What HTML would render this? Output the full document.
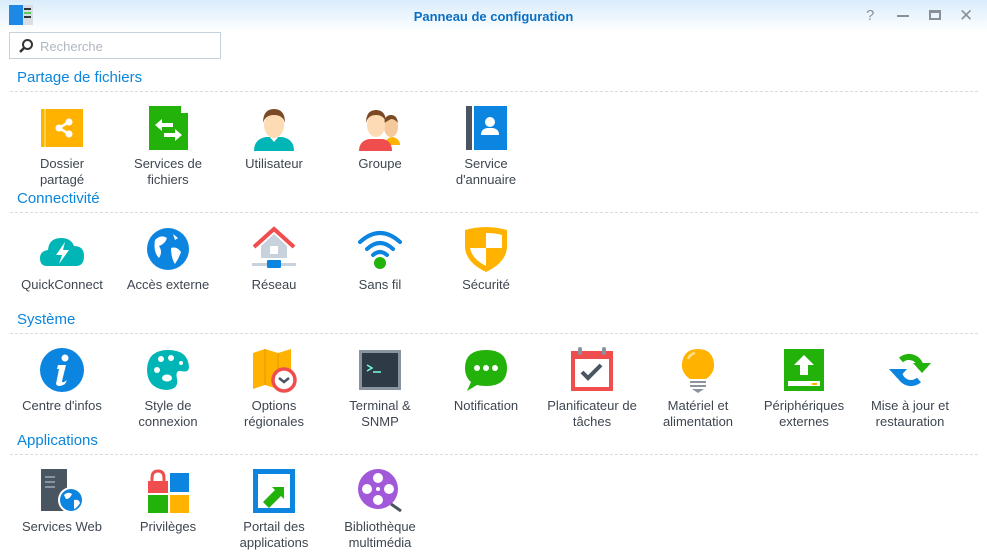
<!DOCTYPE html>
<html><head><meta charset="utf-8"><style>
*{margin:0;padding:0;box-sizing:border-box}
body{width:987px;height:558px;overflow:hidden;background:#fff;font-family:"Liberation Sans",sans-serif;position:relative}
.tb{position:absolute;left:0;top:0;width:987px;height:32px;background:linear-gradient(#d9ecfb,#fff)}
.title{position:absolute;left:0;width:987px;top:9px;text-align:center;font-size:13px;font-weight:bold;color:#0a6fc2}
.search{position:absolute;left:9px;top:32px;width:212px;height:27px;border:1px solid #c5d1dc;background:#fff}
.search span{position:absolute;left:30px;top:6px;font-size:13px;color:#b0b8c0}
.h{position:absolute;left:17px;font-size:15px;color:#0a86dc}
.line{position:absolute;left:10px;width:968px;border-top:1px dashed #d6dce2}
.it{position:absolute;width:106px;text-align:center;font-size:13px;color:#3e4650;line-height:16px}
.it svg{display:block;margin:0 auto 5px;width:46px;height:46px}
</style></head><body>
<div class="tb"></div>
<svg style="position:absolute;left:9px;top:5px" width="24" height="20" viewBox="0 0 24 20"><rect x="0" y="0" width="14" height="20" fill="#1e88e5"/><rect x="14" y="0" width="10" height="20" fill="#d8dee4"/><rect x="15" y="3" width="7" height="2" fill="#333"/><rect x="15" y="7" width="7" height="2" fill="#5c5"/><rect x="15" y="11" width="7" height="2" fill="#333"/></svg>
<div class="title">Panneau de configuration</div>
<div style="position:absolute;left:866px;top:7px;font-size:15px;color:#8a9098">?</div>
<div style="position:absolute;left:897px;top:15px;width:12px;height:2px;background:#8a9098"></div>
<div style="position:absolute;left:929px;top:10px;width:12px;height:10px;border:2px solid #8a9098;border-top-width:3px"></div>
<div style="position:absolute;left:959px;top:6px;font-size:17px;color:#8a9098">✕</div>
<div class="search"><svg style="position:absolute;left:8px;top:5px" width="16" height="16" viewBox="0 0 16 16"><circle cx="9.5" cy="6.5" r="4.5" fill="none" stroke="#333" stroke-width="2"/><line x1="6" y1="10" x2="2" y2="14" stroke="#333" stroke-width="2.5"/></svg><span>Recherche</span></div>

<div class="h" style="top:69px">Partage de fichiers</div><div class="line" style="top:91px"></div>
<div class="h" style="top:190px">Connectivité</div><div class="line" style="top:212px"></div>
<div class="h" style="top:311px">Système</div><div class="line" style="top:333px"></div>
<div class="h" style="top:432px">Applications</div><div class="line" style="top:454px"></div>

<!-- row 1 -->
<div class="it" style="left:9px;top:105px"><svg viewBox="0 0 46 46"><rect x="2" y="4" width="42" height="38" fill="#ffb300"/><rect x="5" y="4" width="2" height="38" fill="#ffd34d"/><g stroke="#fff" stroke-width="2.5"><line x1="20" y1="23" x2="30" y2="17"/><line x1="20" y1="23" x2="30" y2="29"/></g><circle cx="20" cy="23" r="3.5" fill="#fff"/><circle cx="30" cy="17" r="3.5" fill="#fff"/><circle cx="30" cy="29" r="3.5" fill="#fff"/></svg>Dossier<br>partagé</div>
<div class="it" style="left:115px;top:105px"><svg viewBox="0 0 46 46"><path d="M4 1H36L43 8V45H4Z" fill="#22b20a"/><path d="M36 1V8H43Z" fill="#fff"/><path d="M10 20L17 14V18H28V22H17V26Z M37 30L30 24V28H19V32H30V36Z" fill="#fff"/></svg>Services de<br>fichiers</div>
<div class="it" style="left:221px;top:105px"><svg viewBox="0 0 46 46"><path d="M3 46Q3 34 15 32H31Q43 34 43 46Z" fill="#00b5b5"/><path d="M17 30H29L23 37Z" fill="#fff"/><ellipse cx="23" cy="20" rx="10" ry="13" fill="#fddcb5"/><path d="M12 18Q12 4 23 4Q34 4 34 18Q32 10 23 10Q14 10 12 18Z" fill="#7a4a24"/></svg>Utilisateur</div>
<div class="it" style="left:327px;top:105px"><svg viewBox="0 0 46 46"><path d="M26 40Q30 32 36 32Q43 34 43 40Z" fill="#ffb300"/><ellipse cx="34" cy="22" rx="7" ry="10" fill="#f5c99a"/><path d="M27 18Q28 10 34 10Q40 10 41 18Q38 14 34 14Z" fill="#7a4a24"/><path d="M2 46Q2 36 12 34H26Q35 36 35 46Z" fill="#f04e4e"/><ellipse cx="19" cy="20" rx="9" ry="12" fill="#fddcb5"/><path d="M9 18Q9 5 19 5Q29 5 29 18Q27 10 19 10Q11 10 9 18Z" fill="#7a4a24"/></svg>Groupe</div>
<div class="it" style="left:433px;top:105px"><svg viewBox="0 0 46 46"><rect x="3" y="1" width="6" height="44" fill="#4a5562"/><rect x="11" y="1" width="33" height="44" fill="#0c85e0"/><circle cx="27" cy="17" r="5" fill="#fff"/><path d="M18 30Q18 24 24 23H30Q36 24 36 30Z" fill="#fff"/></svg>Service<br>d'annuaire</div>

<!-- row 2 -->
<div class="it" style="left:9px;top:226px"><svg viewBox="0 0 46 46"><path d="M8 40Q1 40 1 32Q1 25 9 24Q10 12 22 12Q32 12 35 20Q45 20 45 30Q45 40 37 40Z" fill="#00b5b5"/><path d="M26 16L17 29H23L20 38L30 24H24Z" fill="#fff"/></svg>QuickConnect</div>
<div class="it" style="left:115px;top:226px"><svg viewBox="0 0 46 46"><circle cx="23" cy="23" r="21" fill="#0c85e0"/><path d="M10 14Q16 8 22 12Q20 18 14 20Q18 26 14 32Q8 26 10 14Z M26 22Q32 20 36 26Q34 32 30 38Q26 32 26 22Z M28 8L33 12L30 14Z" fill="#fff"/></svg>Accès externe</div>
<div class="it" style="left:221px;top:226px"><svg viewBox="0 0 46 46"><path d="M10 20L23 8L36 20V32H10Z" fill="#c8d2dc"/><path d="M3 21L23 3L43 21" fill="none" stroke="#f04e4e" stroke-width="4"/><rect x="19" y="20" width="8" height="8" fill="#fff"/><rect x="1" y="37" width="44" height="3" fill="#c8d2dc"/><rect x="16" y="34" width="14" height="8" rx="1" fill="#0c85e0"/></svg>Réseau</div>
<div class="it" style="left:327px;top:226px"><svg viewBox="0 0 46 46"><g fill="none" stroke="#0c85e0" stroke-width="4" stroke-linecap="round"><path d="M3 16Q23 -2 43 16"/><path d="M10 23Q23 11 36 23"/><path d="M16 29Q23 23 30 29"/></g><circle cx="23" cy="37" r="6" fill="#22b20a"/></svg>Sans fil</div>
<div class="it" style="left:433px;top:226px"><svg viewBox="0 0 46 46"><path d="M2 4Q23 -2 44 4V20Q44 36 23 46Q2 36 2 20Z" fill="#ffb300"/><path d="M7 22H23V40Q9 33 7 22Z M23 7Q33 7 39 9V22H23Z" fill="#fff"/></svg>Sécurité</div>

<!-- row 3 -->
<div class="it" style="left:9px;top:347px"><svg viewBox="0 0 46 46"><circle cx="23" cy="23" r="22" fill="#0c85e0"/><circle cx="26" cy="11" r="3.5" fill="#fff"/><path d="M19 18H27L23 34Q23 37 28 33L26 37Q19 41 17 37L20 22H18Z" fill="#fff"/></svg>Centre d'infos</div>
<div class="it" style="left:115px;top:347px"><svg viewBox="0 0 46 46"><path d="M23 3Q43 3 44 20Q44 26 36 24Q30 23 32 32Q34 42 22 43Q2 42 2 22Q3 3 23 3Z" fill="#00b5b5"/><g fill="#fff"><circle cx="16" cy="12" r="3"/><circle cx="26" cy="11" r="3"/><circle cx="12" cy="23" r="3"/><ellipse cx="22" cy="31" rx="5" ry="3.5"/><circle cx="36" cy="16" r="2"/></g></svg>Style de<br>connexion</div>
<div class="it" style="left:221px;top:347px"><svg viewBox="0 0 46 46"><path d="M2 6L14 2L27 6L40 2V38L27 42L14 38L2 42Z" fill="#ffb300"/><path d="M14 2V38M27 6V42" stroke="#e09a00" stroke-width="1"/><circle cx="33" cy="33" r="11" fill="#fff" stroke="#f04e4e" stroke-width="3.5"/><path d="M28 31L33 35L38 31" fill="none" stroke="#4a5562" stroke-width="2.5"/></svg>Options<br>régionales</div>
<div class="it" style="left:327px;top:347px"><svg viewBox="0 0 46 46"><rect x="2" y="3" width="42" height="40" fill="#8a949e"/><rect x="5" y="6" width="36" height="34" fill="#2e3a46"/><path d="M10 18L15 21L10 24" fill="none" stroke="#7fd" stroke-width="1.5"/><line x1="16" y1="25" x2="24" y2="25" stroke="#7fd" stroke-width="1.5"/></svg>Terminal &amp;<br>SNMP</div>
<div class="it" style="left:433px;top:347px"><svg viewBox="0 0 46 46"><path d="M23 3Q44 3 44 21Q44 39 23 39Q18 39 14 38L4 44L8 35Q2 30 2 21Q2 3 23 3Z" fill="#22b20a"/><circle cx="14" cy="21" r="3" fill="#fff"/><circle cx="23" cy="21" r="3" fill="#fff"/><circle cx="32" cy="21" r="3" fill="#fff"/></svg>Notification</div>
<div class="it" style="left:539px;top:347px"><svg viewBox="0 0 46 46"><rect x="2" y="4" width="42" height="40" fill="#f04e4e"/><rect x="6" y="12" width="34" height="28" fill="#fff"/><rect x="9" y="0" width="4" height="8" rx="2" fill="#8a949e"/><rect x="33" y="0" width="4" height="8" rx="2" fill="#8a949e"/><path d="M13 25L19 31L32 18" fill="none" stroke="#4a5562" stroke-width="4"/></svg>Planificateur de<br>tâches</div>
<div class="it" style="left:645px;top:347px"><svg viewBox="0 0 46 46"><path d="M15 32Q6 26 7 16Q9 2 23 2Q37 2 39 16Q40 26 31 32Z" fill="#ffb300"/><path d="M13 12Q15 7 20 6" fill="none" stroke="#ffe08a" stroke-width="2.5"/><rect x="15" y="34" width="16" height="2" fill="#8a949e"/><rect x="15" y="38" width="16" height="2" fill="#8a949e"/><path d="M17 42H29L23 46Z" fill="#8a949e"/></svg>Matériel et<br>alimentation</div>
<div class="it" style="left:751px;top:347px"><svg viewBox="0 0 46 46"><rect x="3" y="2" width="40" height="42" fill="#22b20a"/><path d="M23 8L33 18H27V28H19V18H13Z" fill="#fff"/><rect x="7" y="34" width="32" height="5" fill="#fff"/><rect x="31" y="36" width="5" height="2" fill="#ffb300"/></svg>Périphériques<br>externes</div>
<div class="it" style="left:857px;top:347px"><svg viewBox="0 0 46 46"><path d="M12 24A12 12 0 0 0 32 33" fill="none" stroke="#0c85e0" stroke-width="6"/><path d="M2 22H20L11 32Z" fill="#0c85e0"/><path d="M34 22A12 12 0 0 0 14 13" fill="none" stroke="#22b20a" stroke-width="6"/><path d="M26 22H44L35 12Z" fill="#22b20a" transform="rotate(180 35 19)"/></svg>Mise à jour et<br>restauration</div>

<!-- row 4 -->
<div class="it" style="left:9px;top:468px"><svg viewBox="0 0 46 46"><rect x="2" y="1" width="26" height="42" fill="#4a5562"/><rect x="6" y="8" width="10" height="2" fill="#8a949e"/><rect x="6" y="13" width="10" height="2" fill="#8a949e"/><rect x="6" y="18" width="10" height="2" fill="#8a949e"/><circle cx="32" cy="32" r="13" fill="#fff"/><circle cx="32" cy="32" r="11" fill="#0c85e0"/><path d="M25 27Q29 23 33 26Q31 31 27 31Z M35 32Q40 31 41 35Q38 40 35 41Z" fill="#fff"/></svg>Services Web</div>
<div class="it" style="left:115px;top:468px"><svg viewBox="0 0 46 46"><path d="M7 14V10Q7 3 13 3Q19 3 19 10V14" fill="none" stroke="#f04e4e" stroke-width="3"/><rect x="3" y="13" width="20" height="12" fill="#f04e4e"/><rect x="25" y="5" width="19" height="19" fill="#0c85e0"/><rect x="3" y="27" width="20" height="18" fill="#22b20a"/><rect x="25" y="27" width="19" height="18" fill="#ffb300"/></svg>Privilèges</div>
<div class="it" style="left:221px;top:468px"><svg viewBox="0 0 46 46"><rect x="2" y="1" width="42" height="44" fill="#0c85e0"/><rect x="7" y="6" width="32" height="34" fill="#fff"/><path d="M12 34L24 22L21 19H33V31L30 28L18 40Z" fill="#22b20a"/></svg>Portail des<br>applications</div>
<div class="it" style="left:327px;top:468px"><svg viewBox="0 0 46 46"><circle cx="21" cy="21" r="20" fill="#a259d9"/><g fill="#fff"><circle cx="21" cy="10" r="5"/><circle cx="10" cy="21" r="5"/><circle cx="32" cy="21" r="5"/><circle cx="21" cy="32" r="5"/><circle cx="21" cy="21" r="2"/></g><path d="M34 36L44 43" stroke="#4a5562" stroke-width="3"/></svg>Bibliothèque<br>multimédia</div>
</body></html>
